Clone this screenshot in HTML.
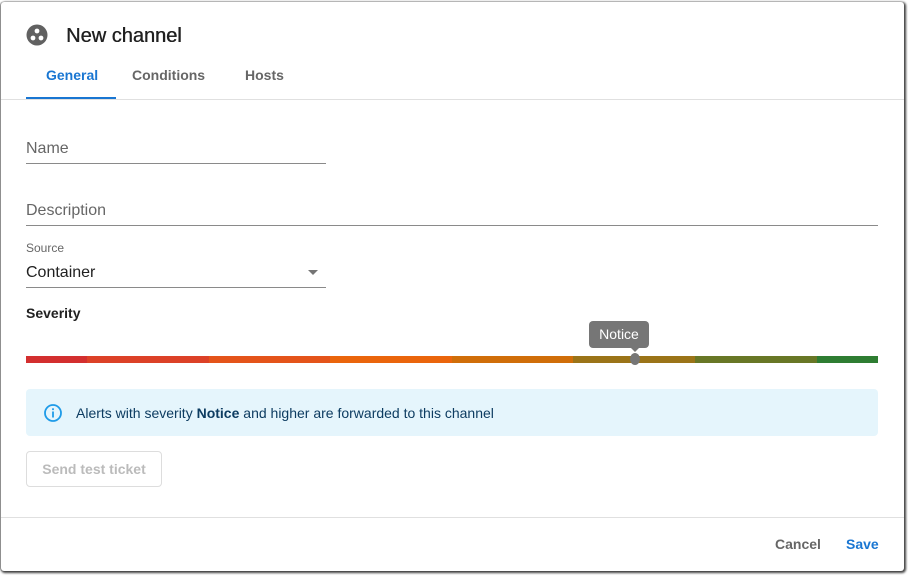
<!DOCTYPE html>
<html><head><meta charset="utf-8"><style>
*{margin:0;padding:0;box-sizing:border-box}
body{width:908px;height:577px;background:#fff;font-family:"Liberation Sans",sans-serif;position:relative;overflow:hidden}
.dlg{position:absolute;left:1px;top:2px;width:903px;height:569px;background:#fff;box-shadow:1px 1px 2px 1px rgba(0,0,0,.75), -1px 0 1px rgba(0,0,0,.3);border-radius:3px}
.a{position:absolute;white-space:nowrap}
.line{position:absolute;height:1px;background:#8a8a8a}
</style></head><body>
<div class="dlg"></div>
<svg class="a" style="left:26px;top:24px" width="22" height="22" viewBox="0 0 22 22"><circle cx="11" cy="11" r="10.5" fill="#616161"/><circle cx="11" cy="7" r="2.4" fill="#fff"/><circle cx="7" cy="14" r="2.4" fill="#fff"/><circle cx="15" cy="14" r="2.4" fill="#fff"/></svg>
<div class="a" style="left:66px;top:25px;font-size:20px;color:#212121;text-shadow:0.4px 0 0 #212121">New channel</div>
<div class="a" style="left:46px;top:67px;font-size:14px;font-weight:bold;color:#1976d2">General</div>
<div class="a" style="left:132px;top:67px;font-size:14px;font-weight:bold;color:#666">Conditions</div>
<div class="a" style="left:245px;top:67px;font-size:14px;font-weight:bold;color:#666">Hosts</div>
<div class="a" style="left:26px;top:97px;width:90px;height:2px;background:#1976d2"></div>
<div class="a" style="left:1px;top:99px;width:903px;height:1px;background:#e0e0e0"></div>
<div class="a" style="left:26px;top:140px;font-size:16px;color:#666">Name</div>
<div class="line" style="left:26px;top:163px;width:300px"></div>
<div class="a" style="left:26px;top:202px;font-size:16px;color:#666">Description</div>
<div class="line" style="left:26px;top:225px;width:852px"></div>
<div class="a" style="left:26px;top:241px;font-size:12px;color:#666">Source</div>
<div class="a" style="left:26px;top:264px;font-size:16px;color:#212121">Container</div>
<div class="a" style="left:308px;top:270px;width:0;height:0;border-left:5px solid transparent;border-right:5px solid transparent;border-top:5px solid #757575"></div>
<div class="line" style="left:26px;top:287px;width:300px"></div>
<div class="a" style="left:26px;top:305px;font-size:14px;font-weight:bold;color:#212121">Severity</div>
<div class="a" style="left:26px;top:356px;height:7px;width:852px;display:flex">
<div style="width:61px;background:#d32f2f"></div><div style="width:122px;background:#dc4127"></div><div style="width:121px;background:#e4541a"></div><div style="width:122px;background:#ea650c"></div><div style="width:121px;background:#d06e09"></div><div style="width:122px;background:#9b7418"></div><div style="width:122px;background:#687726"></div><div style="width:61px;background:#2e7d32"></div></div>
<div class="a" style="left:630px;top:353px;width:10px;height:12px;border-radius:50%;background:#767676"></div>
<div class="a" style="left:589px;top:321px;width:60px;height:27px;background:#767676;border-radius:4px;color:#fff;font-size:14px;text-align:center;line-height:26px">Notice</div>
<div class="a" style="left:630px;top:347px;border-left:5px solid transparent;border-right:5px solid transparent;border-top:5px solid #767676"></div>
<div class="a" style="left:26px;top:389px;width:852px;height:47px;background:#e5f5fc;border-radius:4px"></div>
<svg class="a" style="left:43px;top:403px" width="20" height="20" viewBox="0 0 20 20"><circle cx="10" cy="10" r="8" fill="none" stroke="#1e9be8" stroke-width="1.8"/><rect x="9.1" y="8.5" width="1.8" height="6" fill="#1e9be8"/><rect x="9.1" y="5.3" width="1.8" height="1.8" fill="#1e9be8"/></svg>
<div class="a" style="left:76px;top:405px;font-size:14px;color:#0d3c61">Alerts with severity <b>Notice</b> and higher are forwarded to this channel</div>
<div class="a" style="left:26px;top:451px;width:136px;height:36px;border:1px solid #ddd;border-radius:4px;color:#bbb;font-size:14px;font-weight:bold;text-align:center;line-height:34px">Send test ticket</div>
<div class="a" style="left:1px;top:517px;width:903px;height:1px;background:#e0e0e0"></div>
<div class="a" style="left:775px;top:536px;font-size:14px;font-weight:bold;color:#666">Cancel</div>
<div class="a" style="left:846px;top:536px;font-size:14px;font-weight:bold;color:#1976d2">Save</div>
</body></html>
